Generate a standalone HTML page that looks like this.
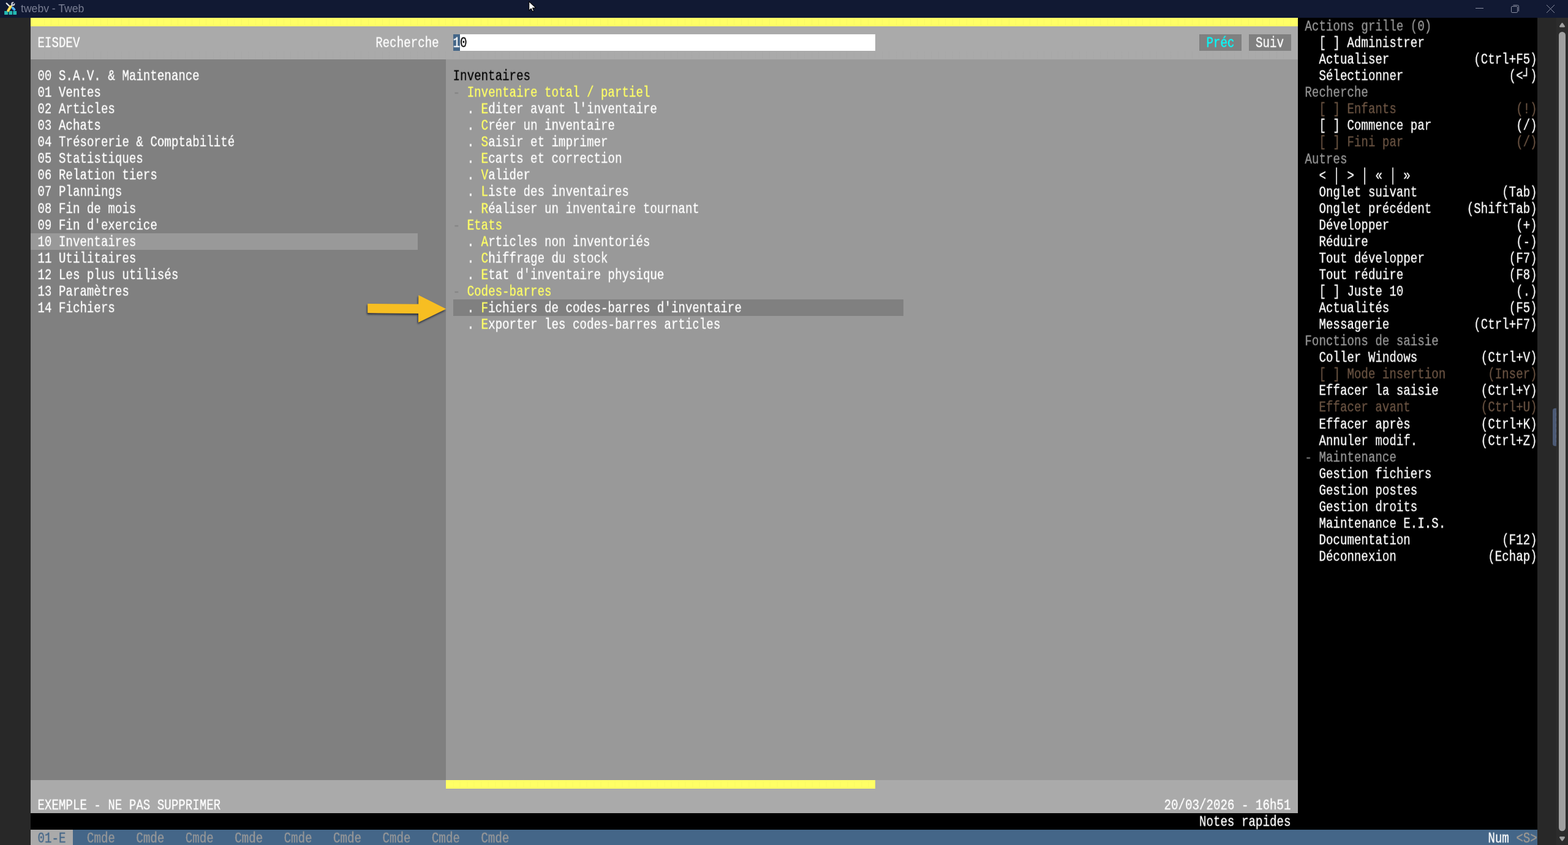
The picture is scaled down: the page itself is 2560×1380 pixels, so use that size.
<!DOCTYPE html>
<html lang="fr"><head><meta charset="utf-8"><title>twebv - Tweb</title><style>
html,body{margin:0;padding:0;background:#282828;}
body{width:2560px;height:1380px;position:relative;overflow:hidden;font-family:"Liberation Mono",monospace;}
.r{position:absolute;}
.t{position:absolute;margin:0;white-space:pre;font-family:"Liberation Mono",monospace;font-size:24.29px;line-height:27.06px;
transform-origin:0 0;transform:translateY(0.756px) scaleX(0.78857);will-change:transform;-webkit-text-stroke:0.3px;}
.y{color:#ffff66} .d{color:#858585} .k{color:#000} .w{color:#fff} .c{color:#00ffff}
.g{color:#999} .gd{color:#777} .x{color:#6b5443} .b{color:#446688} .s{color:#a09a92}
#title{position:absolute;left:34px;top:0;height:29px;line-height:29px;font-family:"Liberation Sans",sans-serif;font-size:17.6px;color:#787d92;white-space:pre;will-change:transform;}
svg{position:absolute;overflow:visible}
</style></head><body>
<div class="r" style="left:0.00px;top:0.00px;width:2560.00px;height:29.00px;background:#111933;"></div>
<div class="r" style="left:50.00px;top:28.00px;width:2069.00px;height:1.25px;background:#020a33;"></div>
<div class="r" style="left:0.00px;top:29.00px;width:50.00px;height:1351.00px;background:#282828;"></div>
<div class="r" style="left:50.00px;top:29.25px;width:2069.00px;height:13.53px;background:#ffff66;"></div>
<div class="r" style="left:50.00px;top:42.78px;width:2069.00px;height:54.12px;background:#aaaaaa;"></div>
<div class="r" style="left:50.00px;top:96.90px;width:678.17px;height:1177.11px;background:#808080;"></div>
<div class="r" style="left:728.17px;top:96.90px;width:1390.83px;height:1177.11px;background:#999999;"></div>
<div class="r" style="left:50.00px;top:1274.01px;width:2069.00px;height:54.12px;background:#aaaaaa;"></div>
<div class="r" style="left:728.17px;top:1274.01px;width:701.16px;height:13.53px;background:#ffff66;"></div>
<div class="r" style="left:50.00px;top:1328.13px;width:2069.00px;height:27.06px;background:#000;"></div>
<div class="r" style="left:2119.00px;top:29.00px;width:390.81px;height:1326.19px;background:#000;"></div>
<div class="r" style="left:50.00px;top:1355.19px;width:2459.81px;height:24.81px;background:#446688;"></div>
<div class="r" style="left:50.00px;top:1355.19px;width:68.97px;height:24.81px;background:#aaaaaa;"></div>
<div class="r" style="left:2509.81px;top:29.00px;width:50.19px;height:1351.00px;background:#282828;"></div>
<div class="r" style="left:2541.00px;top:29.00px;width:19.00px;height:1351.00px;background:#2c2c2c;"></div>
<div class="r" style="left:739.67px;top:56.31px;width:689.67px;height:27.06px;background:#ffffff;"></div>
<div class="r" style="left:739.67px;top:56.31px;width:11.49px;height:27.06px;background:#446688;"></div>
<div class="r" style="left:1958.08px;top:56.31px;width:68.97px;height:27.06px;background:#808080;"></div>
<div class="r" style="left:2038.54px;top:56.31px;width:68.97px;height:27.06px;background:#808080;"></div>
<div class="r" style="left:50.00px;top:381.03px;width:632.19px;height:27.06px;background:#999999;"></div>
<div class="r" style="left:739.67px;top:489.27px;width:735.64px;height:27.06px;background:#808080;"></div>
<div class="r" style="left:61.49px;top:31.25px;width:2057.51px;height:10.53px;background:repeating-linear-gradient(90deg,rgba(0,0,0,0.025) 0,rgba(0,0,0,0.025) 1px,transparent 1px,transparent 11.4944px);background-position:-0.5px 0"></div>
<div class="r" style="left:61.49px;top:84.37px;width:2057.51px;height:11.53px;background:repeating-linear-gradient(90deg,rgba(0,0,0,0.015) 0,rgba(0,0,0,0.015) 1px,transparent 1px,transparent 11.4944px);background-position:-0.5px 0"></div>
<div class="r" style="left:739.67px;top:1275.01px;width:689.67px;height:11.53px;background:repeating-linear-gradient(90deg,rgba(0,0,0,0.025) 0,rgba(0,0,0,0.025) 1px,transparent 1px,transparent 11.4944px);background-position:-0.5px 0"></div>
<pre class="t " style="left:61px;top:110.43px;padding-left:0.56px;color:#fff">00 S.A.V. &amp; Maintenance
01 Ventes
02 Articles
03 Achats
04 Trésorerie &amp; Comptabilité
05 Statistiques
06 Relation tiers
07 Plannings
08 Fin de mois
09 Fin d'exercice
10 Inventaires
11 Utilitaires
12 Les plus utilisés
13 Paramètres
14 Fichiers</pre>
<pre class="t " style="left:739px;top:110.43px;padding-left:0.78px;color:#fff"><span class="k">Inventaires</span>
<span class="d">-</span> <span class="y">Inventaire total / partiel</span>
  . <span class="y">E</span>diter avant l'inventaire
  . <span class="y">C</span>réer un inventaire
  . <span class="y">S</span>aisir et imprimer
  . <span class="y">E</span>carts et correction
  . <span class="y">V</span>alider
  . <span class="y">L</span>iste des inventaires
  . <span class="y">R</span>éaliser un inventaire tournant
<span class="d">-</span> <span class="y">Etats</span>
  . <span class="y">A</span>rticles non inventoriés
  . <span class="y">C</span>hiffrage du stock
  . <span class="y">E</span>tat d'inventaire physique
<span class="d">-</span> <span class="y">Codes-barres</span>
  . <span class="y">F</span>ichiers de codes-barres d'inventaire
  . <span class="y">E</span>xporter les codes-barres articles</pre>
<pre class="t " style="left:61px;top:56.31px;padding-left:0.56px;color:#fff">EISDEV</pre>
<pre class="t " style="left:613px;top:56.31px;padding-left:0.23px;color:#fff">Recherche</pre>
<pre class="t " style="left:739px;top:56.31px;padding-left:0.78px;color:#fff"><span class="w">1</span><span class="k">0</span></pre>
<pre class="t " style="left:1969px;top:56.31px;padding-left:0.66px;color:#fff"><span class="c">Préc</span>   Suiv</pre>
<pre class="t " style="left:61px;top:1301.07px;padding-left:0.56px;color:#fff">EXEMPLE - NE PAS SUPPRIMER</pre>
<pre class="t " style="left:1900px;top:1301.07px;padding-left:0.70px;color:#fff">20/03/2026 - 16h51</pre>
<pre class="t " style="left:1958px;top:1328.13px;padding-left:0.04px;color:#fff">Notes rapides</pre>
<pre class="t " style="left:61px;top:1355.19px;padding-left:0.56px;color:#999999"><span class="b">01-E</span>   Cmde   Cmde   Cmde   Cmde   Cmde   Cmde   Cmde   Cmde   Cmde</pre>
<pre class="t " style="left:2429px;top:1355.19px;padding-left:0.38px;color:#fff">Num <span class="s">&lt;S&gt;</span></pre>
<pre class="t " style="left:2130px;top:29.25px;padding-left:0.56px;color:#fff"><span class="g">Actions grille (0)</span>
  [ ] Administrer
  Actualiser            (Ctrl+F5)
  Sélectionner               (&lt;┘)
<span class="g">Recherche</span>
<span class="x">  [ ] Enfants                 (!)</span>
  [ ] Commence par            (/)
<span class="x">  [ ] Fini par                (/)</span>
<span class="g">Autres</span>
  &lt; │ &gt; │ « │ »
  Onglet suivant            (Tab)
  Onglet précédent     (ShiftTab)
  Développer                  (+)
  Réduire                     (-)
  Tout développer            (F7)
  Tout réduire               (F8)
  [ ] Juste 10                (.)
  Actualités                 (F5)
  Messagerie            (Ctrl+F7)
<span class="g">Fonctions de saisie</span>
  Coller Windows         (Ctrl+V)
<span class="x">  [ ] Mode insertion      (Inser)</span>
  Effacer la saisie      (Ctrl+Y)
<span class="x">  Effacer avant          (Ctrl+U)</span>
  Effacer après          (Ctrl+K)
  Annuler modif.         (Ctrl+Z)
<span class="g"><span class="gd">-</span> Maintenance</span>
  Gestion fichiers
  Gestion postes
  Gestion droits
  Maintenance E.I.S.
  Documentation             (F12)
  Déconnexion             (Echap)</pre>
<div id="title">twebv - Tweb</div>

<svg style="left:0;top:0" width="2560" height="1380" viewBox="0 0 2560 1380">
 <!-- app icon -->
 <defs>
  <linearGradient id="gy" x1="0" y1="0" x2="1" y2="1"><stop offset="0" stop-color="#f3c02a"/><stop offset=".5" stop-color="#fde768"/><stop offset="1" stop-color="#f0b81e"/></linearGradient>
  <linearGradient id="gb" x1="0" y1="1" x2="1" y2="0"><stop offset="0" stop-color="#2a9cf0"/><stop offset="1" stop-color="#6cc6ff"/></linearGradient>
 </defs>
 <g>
  <path d="M10.7 5.5 L15.2 9.8" stroke="#e1e3e9" stroke-width="2.3" stroke-linecap="round"/>
  <path d="M20.1 7.9 L18.2 10" stroke="#d0d3db" stroke-width="2.4"/>
  <circle cx="21.3" cy="6.4" r="2.1" fill="#4a4f63" stroke="#d6d9e0" stroke-width="1.9"/>
  <path d="M21.6 6.1 L24.4 3.3" stroke="#111933" stroke-width="1.7"/>
  <path d="M20.4 12.7 L23.3 15.6" stroke="url(#gb)" stroke-width="3.9" stroke-linecap="round"/>
  <rect x="7.1" y="17.9" width="6" height="6.1" rx=".4" fill="#24b8b2"/><rect x="14.4" y="17.9" width="5.7" height="6.1" rx=".4" fill="#24b8b2"/><rect x="21.3" y="17.9" width="5.8" height="6.1" rx=".4" fill="#24b8b2"/>
  <path d="M13.3 17.3 L17.3 10.9" stroke="url(#gy)" stroke-width="4.2" stroke-linecap="round"/>
 </g>
 <!-- window controls -->
 <g stroke="#8c90a2" stroke-width="1" fill="none">
  <path d="M2409 13.5 H2422"/>
  <rect x="2467.5" y="10.5" width="10" height="10" rx="1.3"/>
  <path d="M2470.5 8.5 H2477.7 Q2479.5 8.5 2479.5 10.3 V18.5"/>
  <path d="M2525 8 L2538 21 M2538 8 L2525 21"/>
 </g>
 <!-- mouse cursor -->
 <path d="M863.7 2.3 V17.2 L867.2 14 L869.4 18.7 L871.6 17.7 L869.5 13.1 L874.6 12.7 Z" fill="#fff" stroke="#000" stroke-width="1.1" stroke-linejoin="round"/>
 <!-- scrollbar -->
 <path d="M2550.5 38.4 L2553.8 43.2 H2547.2 Z" fill="#a0a0a0" stroke="#a0a0a0" stroke-width="2.4" stroke-linejoin="round"/>
 <path d="M2550.5 1372.3 L2553.8 1367.5 H2547.2 Z" fill="#a0a0a0" stroke="#a0a0a0" stroke-width="2.4" stroke-linejoin="round"/>
 <rect x="2545" y="52" width="11" height="1305.3" rx="5.5" fill="#a0a0a0"/>
 <path d="M2541 666.8 H2539 Q2535 666.8 2535 670.8 V724.6 Q2535 728.6 2539 728.6 H2541 Z" fill="#4c5a75"/>
 <path d="M2540.5 674 V722" stroke="#66748f" stroke-width=".6" stroke-dasharray="5 4" fill="none"/>
 <!-- arrow -->
 <defs><filter id="sh" x="-10%" y="-20%" width="120%" height="150%"><feDropShadow dx="-1" dy="2.4" stdDeviation="1.6" flood-color="#10152c" flood-opacity=".8"/></filter></defs>
 <path filter="url(#sh)" d="M600.3 496 L683.2 496.8 L683.4 482 L728.2 504.5 L683 526.6 L683 512 L600.3 511 Z" fill="#f7be20"/>
</svg>

</body></html>
